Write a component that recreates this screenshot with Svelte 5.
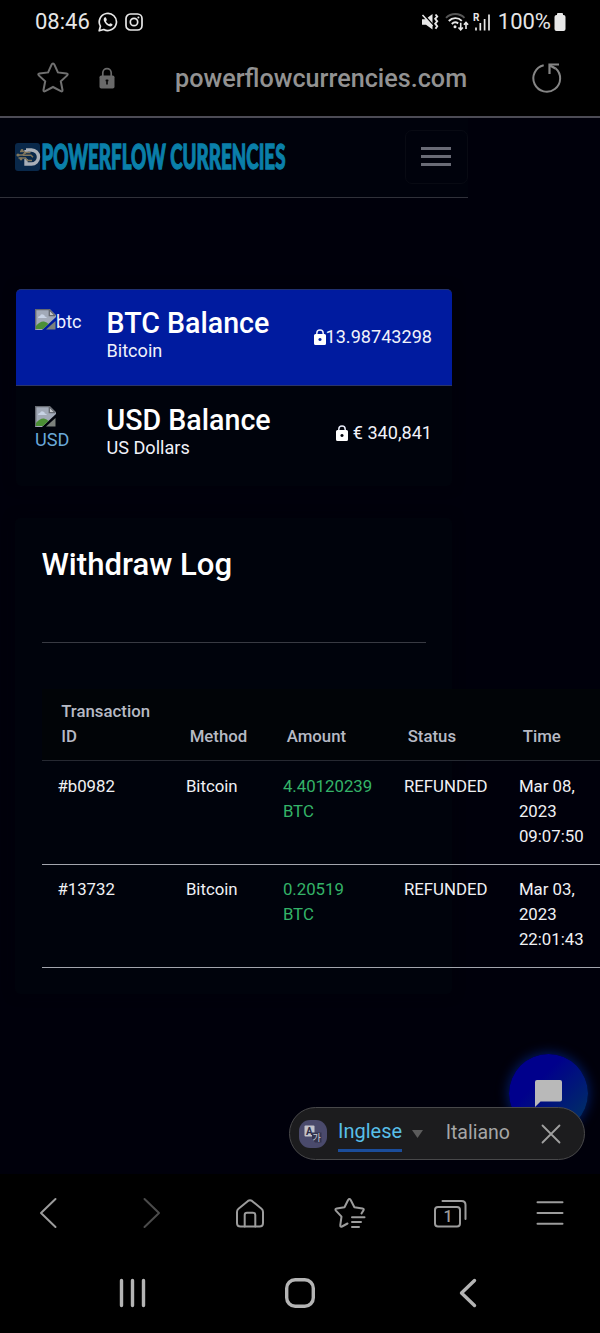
<script>
	const wallets = [
		{ alt: 'btc', title: 'BTC Balance', name: 'Bitcoin', amount: '13.98743298', active: true },
		{ alt: 'USD', title: 'USD Balance', name: 'US Dollars', amount: '€ 340,841', active: false }
	];

	const columns = ['Transaction ID', 'Method', 'Amount', 'Status', 'Time'];

	const withdrawals = [
		{
			id: '#b0982',
			method: 'Bitcoin',
			amount: '4.40120239 BTC',
			status: 'REFUNDED',
			time: 'Mar 08, 2023 09:07:50'
		},
		{
			id: '#13732',
			method: 'Bitcoin',
			amount: '0.20519 BTC',
			status: 'REFUNDED',
			time: 'Mar 03, 2023 22:01:43'
		}
	];
</script>

<div class="phone">
	<div class="status">
		<span class="clock">08:46</span>
		<svg class="whatsapp" width="20" height="20" viewBox="0 0 20 20">
			<path
				d="M1.2 18.8l1.2-4.6A8.6 8.6 0 1 1 5.8 17.5z"
				fill="none"
				stroke="#e8e8e8"
				stroke-width="1.7"
				stroke-linejoin="round"
			/>
			<path
				d="M6.9 5.2c-1.4.8-1.5 2.4-.7 4.2 1.1 2.3 2.9 4.1 5.3 4.9 1.7.5 3-.3 3.1-1.7 0-.4-1.9-1.4-2.3-1.3-.5.1-.8 1.1-1.2 1-1.4-.6-2.6-1.7-3.1-3 0-.4.8-.8.8-1.3 0-.5-.8-2.5-1.1-2.7z"
				fill="#e8e8e8"
			/>
		</svg>
		<svg width="18" height="18" viewBox="0 0 18 18" fill="none" stroke="#e8e8e8">
			<rect x="1" y="1" width="16" height="16" rx="4.5" stroke-width="1.7" />
			<circle cx="9" cy="9" r="3.7" stroke-width="1.7" />
			<circle cx="13.4" cy="4.6" r="1" fill="#e8e8e8" stroke="none" />
		</svg>
		<div class="spacer"></div>
		<svg class="mute" width="18" height="18" viewBox="0 0 18 18">
			<path d="M1 6.3h3.5L11.5 1v15.5L5 11.8H1z" fill="#e8e8e8" />
			<path d="M2 .5l11 12.5" stroke="#000" stroke-width="1.5" />
			<path d="M1.5 2l10 11" stroke="#e8e8e8" stroke-width="1.5" />
			<path
				d="M14.5 1.5l1.7 2-2 2.3 2 2.5-2 2.4 2 2.5-1.7 2.5"
				fill="none"
				stroke="#e8e8e8"
				stroke-width="1.9"
			/>
		</svg>
		<svg class="wifi" width="24" height="20" viewBox="0 0 24 20" fill="none" stroke-width="1.9">
			<path d="M1 5.8a13 13 0 0 1 18.5 0" stroke="#555" />
			<path d="M3.8 9a9 9 0 0 1 13-.2M6.8 12a5 5 0 0 1 6.4-.6" stroke="#e8e8e8" />
			<circle cx="10" cy="14.8" r="1.5" fill="#e8e8e8" />
			<path
				d="M15.7 10.8v7M13.5 15.5l2.2 2.3 2.2-2.3M21 17v-6.5M18.9 12.7L21 10.5l2.1 2.2"
				stroke="#e8e8e8"
				stroke-width="1.6"
			/>
		</svg>
		<svg class="signal" width="18" height="18" viewBox="0 0 18 18">
			<text x="0" y="8" font-size="10" font-weight="700" fill="#e8e8e8">R</text>
			<path d="M3 14.5v3M7.3 10v7.5M11.6 6v11.5M16 1.5v16" stroke="#e8e8e8" stroke-width="1.7" />
		</svg>
		<span class="percent">100%</span>
		<svg width="12" height="18" viewBox="0 0 12 18" fill="#e8e8e8">
			<rect x="3" y="0" width="6" height="4" rx="1" />
			<rect x=".5" y="2" width="11" height="16" rx="2" />
		</svg>
	</div>

	<div class="address">
		<svg width="34" height="34" viewBox="0 0 34 34">
			<path
				d="M17 2.5q.9 0 1.4 1.1l3.5 7.8 8.6 1q2 .4.7 2L24.8 20.3l1.7 8.7q.2 2-1.7 1.2L17 26l-7.8 4.2q-1.9.8-1.7-1.2l1.7-8.7L2.8 14.4q-1.3-1.6.7-2l8.6-1 3.5-7.8q.5-1.1 1.4-1.1z"
				fill="none"
				stroke="#707070"
				stroke-width="2"
			/>
		</svg>
		<svg class="secure" width="16" height="22" viewBox="0 0 16 22">
			<path d="M3.8 9V5.8a4.2 4.2 0 0 1 8.4 0V9" fill="none" stroke="#696969" stroke-width="1.7" />
			<rect x=".5" y="8.5" width="15" height="13" rx="1.8" fill="#696969" />
			<path d="M8 12.5v5M6.6 13.5h2.8" stroke="#050505" stroke-width="1.6" />
		</svg>
		<span class="host">powerflowcurrencies.com</span>
		<svg class="reload" width="32" height="32" viewBox="0 0 32 32" fill="none" stroke="#858585" stroke-width="2">
			<path d="M13.7 3.3A13.4 13.4 0 1 0 25.5 6.2" />
			<path d="M29 2.5H19.5v9.5" stroke-width="2.2" />
			<path d="M20 3.5l5.5 3" stroke-width="2.5" />
		</svg>
	</div>

	<main>
		<header>
			<svg class="brand" width="280" height="34" viewBox="0 -2 280 34">
				<rect x="0" y="1" width="25" height="28" rx="3" fill="#09284a" />
				<path
					d="M11 8h5.5a6.5 6.5 0 0 1 0 14H11v-5M11 8v3"
					fill="none"
					stroke="#a9afb8"
					stroke-width="3.4"
				/>
				<path
					d="M2.5 13h5l3-2.5h5M5 9.5h4l2 2M3.5 16h7l2 2.5h4.5M8 13.2h8l2 2"
					fill="none"
					stroke="#81765c"
					stroke-width="1.5"
				/>
				<circle cx="3" cy="13" r="1.6" fill="#81765c" />
				<circle cx="7" cy="8.5" r="1.4" fill="#81765c" />
				<circle cx="6" cy="17" r="1.4" fill="#81765c" />
				<text transform="translate(26.5 27) scale(.61 1)" textLength="400" lengthAdjust="spacingAndGlyphs">POWERFLOW CURRENCIES</text>
			</svg>
			<button class="toggler" aria-label="Menu">
				<i></i>
				<i></i>
				<i></i>
			</button>
		</header>

		<section class="wallets">
			{#each wallets as wallet}
				<div class="wallet" class:active={wallet.active}>
					<div class="coin">
						<svg width="21" height="21" viewBox="0 0 21 21">
							<path d="M0 0h14.5L21 6.5V8L7 21H0z" fill="#a2aab8" />
							<path d="M14.5 0v6.5H21z" fill="#c5c8cd" />
							<path d="M.7 20.5V.7h13.6l6 6M14.3.7v6h6" fill="none" stroke="#656970" stroke-width="1.3" />
							<path d="M3 9q0-2 2-2 .8-2.5 3-1.5 2 .5 1.8 2 2 .2 2 1.5z" fill="#c8d3e5" />
							<path d="M1 20v-3q4-5 8-4.5 3 .5 4.5 2.5L8 20z" fill="#4b8f35" />
							<path d="M20.5 12v8.5H11z" fill="#7b817c" />
						</svg><span>{wallet.alt}</span>
					</div>
					<div class="label">
						<h4>{wallet.title}</h4>
						<p>{wallet.name}</p>
					</div>
					<div class="amount">
						<svg width="12" height="16" viewBox="0 0 12 16">
							<path d="M2.8 6V4.2a3.2 3.2 0 0 1 6.4 0V6" fill="none" stroke="#e6eaf8" stroke-width="1.5" />
							<path
								d="M1.5 5h9Q12 5 12 6.5v8q0 1.5-1.5 1.5h-9Q0 16 0 14.5v-8Q0 5 1.5 5zM6 8.900a1.6 1.6 0 1 0 .01 0z"
								fill="#fff"
								fill-rule="evenodd"
							/>
						</svg>
						<span>{wallet.amount}</span>
					</div>
				</div>
			{/each}
		</section>

		<section class="log">
			<h3>Withdraw Log</h3>
			<hr />
			<div class="table">
				<div class="row head">
					{#each columns as column}
						<span>{column}</span>
					{/each}
				</div>
				{#each withdrawals as item}
					<div class="row">
						<span>{item.id}</span>
						<span>{item.method}</span>
						<span class="green">{item.amount}</span>
						<span>{item.status}</span>
						<span>{item.time}</span>
					</div>
				{/each}
			</div>
		</section>

		<button class="chat" aria-label="Chat">
			<svg width="27" height="27" viewBox="0 0 27 27">
				<path d="M2 0h23q2 0 2 2v17.5q0 2-2 2H5.5L0 27V2q0-2 2-2z" fill="#b9b9b9" />
			</svg>
		</button>

		<div class="translate">
			<svg class="lang-icon" width="28" height="28" viewBox="0 0 28 28">
				<rect width="28" height="28" rx="11" fill="#4a4a6c" />
				<rect x="5.5" y="5.5" width="10" height="11" rx="1" fill="#c3c3cb" />
				<text x="7" y="14.5" font-size="10" font-weight="700" fill="#2c2c46">A</text>
				<path d="M13 12.5h9.5v10H16l-3-4z" fill="#34344e" />
				<text class="hangul" x="13.5" y="21" font-size="9" fill="#d0d0d8">가</text>
			</svg>
			<span class="from">Inglese</span>
			<svg class="caret" width="11" height="8" viewBox="0 0 11 8"><path d="M0 0h11L5.5 8z" fill="#5c5c5c" /></svg>
			<span class="to">Italiano</span>
			<svg class="close" width="20" height="20" viewBox="0 0 20 20">
				<path d="M1.5 1.5l17 17M18.5 1.5l-17 17" stroke="#a0a0a0" stroke-width="1.8" stroke-linecap="round" />
			</svg>
		</div>
	</main>

	<nav class="toolbar">
		<svg width="40" height="40" viewBox="0 0 40 40"><path d="M27.5 6L13 20l14.500 14" /></svg>
		<svg class="dim" width="40" height="40" viewBox="0 0 40 40"><path d="M16.5 6L31 20 16.5 34" /></svg>
		<svg width="40" height="40" viewBox="0 0 40 40">
			<path d="M8 19q0-2 1.5-3.2L19 7.9q2-1.5 4 0l9.5 7.9Q34 17 34 19v11q0 3.5-3.5 3.5h-19Q8 33.5 8 30z" />
			<path d="M15.7 33.5V22q0-2.3 2.3-2.3h6q2.3 0 2.3 2.3v11.5" />
		</svg>
		<svg width="40" height="40" viewBox="0 0 40 40">
			<path
				d="M32.5 20.5l1.8-2.9q1.3-1.8-.9-2.2l-8-1.2-3.7-7.2q-1.3-1.8-2.6 0L15.5 14.2l-7.7 1.2q-2.2.4-.9 2.2l5.6 6-1.2 8.4q-.2 2.3 1.7 1.5l5.5-3"
			/>
			<path d="M23 24.2h12.5M23 29h9M23 34h7" />
		</svg>
		<svg width="40" height="40" viewBox="0 0 40 40">
			<rect x="5" y="14" width="25" height="19.5" rx="3" />
			<path d="M12.5 8h19Q35.5 8 35.5 12v14" />
			<text x="13.5" y="29.3" font-size="16" font-weight="500">1</text>
		</svg>
		<svg width="40" height="40" viewBox="0 0 40 40"><path d="M7.5 9.3h25M7.5 20h25M7.5 30.7h25" /></svg>
	</nav>

	<nav class="system">
		<svg width="40" height="40" viewBox="0 0 40 40">
			<path d="M8.5 7.5v25M19.5 7.5v25M30.5 7.5v25" />
		</svg>
		<svg width="40" height="40" viewBox="0 0 40 40"><rect x="6.7" y="6.7" width="26.6" height="26.6" rx="8.5" /></svg>
		<svg width="40" height="40" viewBox="0 0 40 40"><path d="M26.5 7.5L13.5 20l13 12.5" /></svg>
	</nav>
</div>

<style>
	:global(body) {
		margin: 0;
		background: #000;
	}
	.phone {
		display: flex;
		flex-direction: column;
		width: 600px;
		height: 1333px;
		overflow: hidden;
		background: #000;
		color: #fff;
		font-family: Roboto, sans-serif;
	}
	svg {
		display: block;
		flex: none;
	}
	.status {
		display: flex;
		align-items: center;
		height: 44px;
		padding: 0 34px 1px 35px;
		box-sizing: border-box;
		color: #e6e6e6;
		font-size: 22px;
	}
	.status .whatsapp {
		margin: 0 7px 0 8px;
	}
	.spacer {
		flex: 1;
	}
	.mute {
		margin-right: 6px;
	}
	.wifi {
		margin-right: 4px;
	}
	.signal {
		margin-right: 7px;
	}
	.percent {
		margin-right: 3px;
	}
	.address {
		display: flex;
		align-items: center;
		height: 74px;
		padding: 0 38px 4px 36px;
		box-sizing: border-box;
		border-bottom: 2px solid #4c4b55;
	}
	.secure {
		margin: 0 60px 0 29px;
	}
	.host {
		flex: 1;
		color: #929292;
		font-size: 25.2px;
		font-weight: 500;
		white-space: nowrap;
	}
	main {
		position: relative;
		height: 1056px;
		background: #00000b;
	}
	header {
		display: flex;
		align-items: center;
		justify-content: space-between;
		width: 467.5px;
		height: 80px;
		padding: 0 0 1px 15px;
		box-sizing: border-box;
		background: #00020c;
		border-bottom: 1.5px solid #30313a;
	}
	.brand {
		overflow: visible;
	}
	.brand text {
		fill: #0a7fa9;
		stroke: #0a7fa9;
		stroke-width: 1.3;
		font-family: Lato, sans-serif;
		font-size: 35px;
		font-weight: 900;
	}
	.toggler {
		display: flex;
		flex-direction: column;
		align-items: center;
		justify-content: center;
		gap: 5px;
		width: 63px;
		height: 54px;
		padding: 0 0 2px;
		background: none;
		border: 1.5px solid #080a13;
		border-radius: 7px;
	}
	.toggler i {
		width: 30px;
		height: 3px;
		background: #696b76;
	}
	.wallets {
		width: 436.5px;
		height: 197px;
		margin: 91px 0 0 15.5px;
		background: #00030c;
		border-radius: 5px;
		box-shadow: 0 0 12px #00020b;
	}
	.wallet {
		display: flex;
		height: 96px;
		padding: 20px 20px 0 19.5px;
		box-sizing: border-box;
		font-size: 18.1px;
	}
	.wallet.active {
		height: 97px;
		padding-top: 19px;
		background: #001b9f;
		border-top: 1px solid #20306f;
		border-bottom: 1px solid #2b3568;
		border-radius: 5px 5px 0 0;
	}
	.wallet.active .coin {
		display: flex;
		color: #eef2ff;
	}
	.coin {
		width: 71.5px;
		color: #6aa9d8;
	}
	.coin span {
		display: block;
		line-height: 26px;
	}
	.label {
		flex: 1;
	}
	h4 {
		margin: -3px 0 0;
		font-size: 28.6px;
		font-weight: 500;
		line-height: 34px;
	}
	.label p {
		margin: 0;
		line-height: 21px;
		color: #f0f2fa;
	}
	.amount {
		display: flex;
		align-items: center;
		height: 53px;
		color: #f0f2fa;
	}
	.wallet.active .amount {
		height: 55px;
	}
	.wallet:not(.active) .amount span {
		margin-left: 5px;
	}
	.log {
		width: 437px;
		height: 476px;
		margin: 32px 0 0 15px;
		padding: 27px 0 0 26.5px;
		box-sizing: border-box;
		background: #00030c;
		border-radius: 5px;
		box-shadow: 0 0 12px #00020b;
	}
	h3 {
		margin: 0;
		font-size: 31.1px;
		font-weight: 500;
		line-height: 40px;
	}
	hr {
		width: 384.5px;
		height: 1px;
		margin: 57px 0 45.5px;
		background: #383a43;
		border: 0;
	}
	.table {
		width: 600px;
	}
	.row {
		display: grid;
		grid-template-columns: 128.5px 97px 121px 115px 110px;
		height: 103.3px;
		padding-top: 12.5px;
		box-sizing: border-box;
		border-bottom: 1.5px solid #a3a5ae;
		color: #f0f1f4;
		font-size: 16.8px;
		line-height: 25px;
	}
	.row span {
		padding: 0 12px 0 15.9px;
	}
	.row .green {
		color: #34b368;
	}
	.head {
		align-items: end;
		height: 72px;
		margin-bottom: 1px;
		padding: 0 0 10.5px;
		background: #010407;
		border-bottom-color: #262932;
		color: #b6bac4;
		font-weight: 500;
	}
	.row.head span {
		padding: 0 12px 0 19.7px;
	}
	.chat {
		position: absolute;
		top: 936px;
		left: 509px;
		display: flex;
		justify-content: center;
		width: 79px;
		height: 79px;
		padding: 26px 0 0;
		background: linear-gradient(135deg, #00008c 35%, #003064 90%);
		border: 0;
		border-radius: 50%;
		box-shadow: 0 0 12px 1px #001c6a;
	}
	.translate {
		position: absolute;
		top: 989px;
		left: 289px;
		display: flex;
		align-items: center;
		width: 296px;
		height: 53px;
		padding-left: 9px;
		box-sizing: border-box;
		background: #1c1c1e;
		border: 1.5px solid #48484a;
		border-radius: 27px;
		font-size: 20px;
	}
	.lang-icon .hangul {
		font-family: "Noto Sans CJK KR", sans-serif;
	}
	.from {
		margin: 4px 10px 0 11px;
		padding-bottom: 6px;
		border-bottom: 3px solid #1b4d9b;
		color: #58bfe8;
	}
	.to {
		margin: 0 31px 3px 22.5px;
		color: #a6a6a6;
		font-size: 19.5px;
	}
	.toolbar {
		display: flex;
		justify-content: space-between;
		height: 79px;
		padding: 19px 30px 0 28px;
		box-sizing: border-box;
		fill: none;
		stroke: #9c9c9c;
		stroke-width: 2;
		stroke-linecap: round;
		stroke-linejoin: round;
	}
	.toolbar .dim {
		stroke: #4b4b4b;
	}
	.toolbar text {
		fill: #9c9c9c;
		stroke: none;
	}
	.system {
		display: flex;
		justify-content: space-between;
		padding: 20px 112px 0 112.5px;
		fill: none;
		stroke: #b4b4b4;
		stroke-width: 3.4;
		stroke-linecap: round;
		stroke-linejoin: round;
	}
</style>
